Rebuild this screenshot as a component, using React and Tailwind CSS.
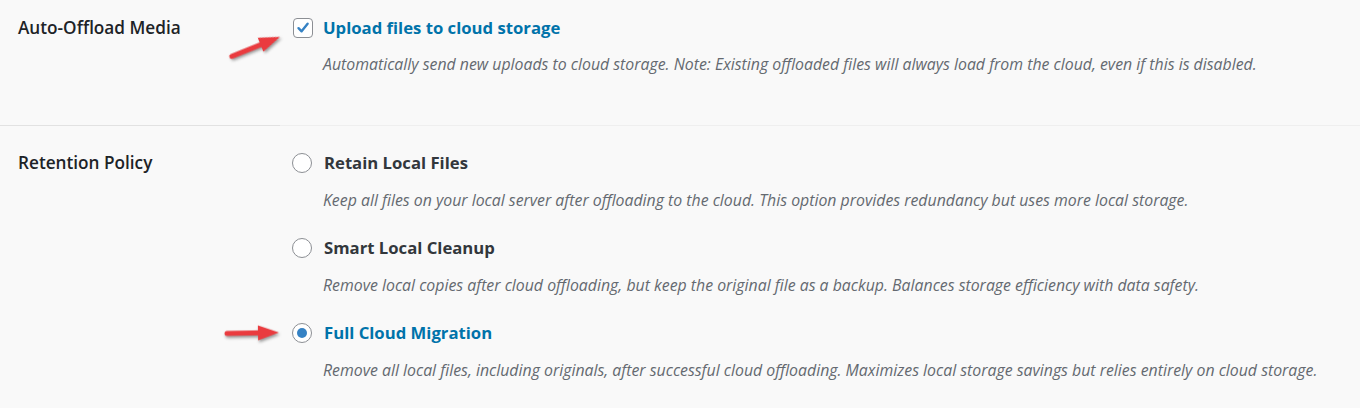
import { useState } from 'react';

const font = { fontFamily: '"Open Sans", "Noto Sans", sans-serif' };

const options = [
  {
    id: 'retain',
    title: 'Retain Local Files',
    desc: 'Keep all files on your local server after offloading to the cloud. This option provides redundancy but uses more local storage.',
  },
  {
    id: 'smart',
    title: 'Smart Local Cleanup',
    desc: 'Remove local copies after cloud offloading, but keep the original file as a backup. Balances storage efficiency with data safety.',
  },
  {
    id: 'full',
    title: 'Full Cloud Migration',
    desc: 'Remove all local files, including originals, after successful cloud offloading. Maximizes local storage savings but relies entirely on cloud storage.',
  },
];

const Arrow = ({ className, rotate }) => (
  <svg
    className={`absolute pointer-events-none ${className}`}
    width="56"
    height="18"
    viewBox="0 0 56 18"
    style={{ transform: `rotate(${rotate}deg)`, filter: 'drop-shadow(1px 2px 1.5px rgba(0,0,0,0.4))' }}
  >
    <path d="M3 9 L36 9" stroke="#ea3b3f" strokeWidth="5" strokeLinecap="round" />
    <path d="M34 1.5 L55 9 L34 16.5 Z" fill="#ea3b3f" />
  </svg>
);

const Radio = ({ checked }) => (
  <span className="flex h-5 w-5 shrink-0 items-center justify-center rounded-full border border-[#8c8f94] bg-white">
    {checked && <span className="h-[10px] w-[10px] rounded-full bg-[#3582c4]" />}
  </span>
);

export default function App() {
  const [upload, setUpload] = useState(true);
  const [policy, setPolicy] = useState('full');

  return (
    <div className="relative h-[408px] w-[1360px] overflow-hidden bg-[#f9f9f9]" style={font}>
      {/* Auto-offload */}
      <div className="flex pt-[18px] pb-[51px]">
        <div className="w-[275px] shrink-0 pl-[18px] text-[17.2px] leading-5 font-semibold text-[#1d2327]">
          Auto-Offload Media
        </div>
        <div className="pl-[18px]">
          <label className="flex items-center gap-[10px] cursor-pointer" onClick={() => setUpload(!upload)}>
            <span className="flex h-5 w-5 items-center justify-center rounded-[4px] border border-[#8c8f94] bg-white">
              {upload && (
                <svg width="16" height="16" viewBox="0 0 16 16">
                  <path d="M3.5 8.2 L6.6 11.3 L12.6 3.8" fill="none" stroke="#3582c4" strokeWidth="2.4" strokeLinecap="round" strokeLinejoin="round" />
                </svg>
              )}
            </span>
            <span className="text-[16.7px] leading-5 font-bold text-[#0073aa]">Upload files to cloud storage</span>
          </label>
          <p className="mt-4 pl-[30px] text-[15.85px] leading-5 italic text-[#646970] whitespace-nowrap">
            Automatically send new uploads to cloud storage. Note: Existing offloaded files will always load from the cloud, even if this is disabled.
          </p>
        </div>
      </div>

      <div className="flex h-px">
        <div className="w-[280px] bg-[#e2e2e2]" />
        <div className="flex-1 bg-[#efefef]" />
      </div>

      {/* Retention */}
      <div className="flex pt-[27px]">
        <div className="w-[275px] shrink-0 pl-[18px] text-[17.2px] leading-5 font-semibold text-[#1d2327]">
          Retention Policy
        </div>
        <div className="flex flex-col gap-[28px] pl-[17px]">
          {options.map((o) => {
            const active = policy === o.id;
            return (
              <div key={o.id}>
                <label className="flex items-center gap-[12px] cursor-pointer" onClick={() => setPolicy(o.id)}>
                  <Radio checked={active} />
                  <span className={`text-[16.7px] leading-5 font-bold ${active ? 'text-[#0073aa]' : 'text-[#32373c]'}`}>
                    {o.title}
                  </span>
                </label>
                <p className="mt-[17px] pl-[31px] text-[15.85px] leading-5 italic text-[#646970] whitespace-nowrap">{o.desc}</p>
              </div>
            );
          })}
        </div>
      </div>

      <Arrow className="left-[227px] top-[38px]" rotate={-22} />
      <Arrow className="left-[224px] top-[324px]" rotate={-1} />
    </div>
  );
}
